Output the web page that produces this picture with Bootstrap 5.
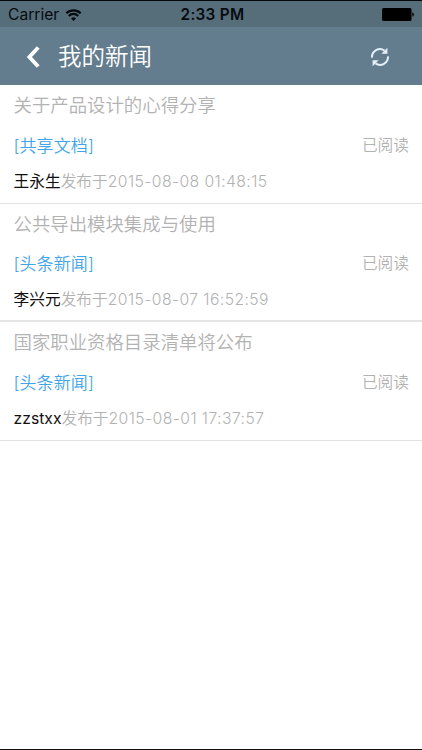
<!DOCTYPE html>
<html lang="zh-CN">
<head>
<meta charset="utf-8">
<meta name="viewport" content="width=device-width, initial-scale=1">
<title>我的新闻</title>
<link href="https://cdn.jsdelivr.net/npm/bootstrap@5.3.0/dist/css/bootstrap.min.css" rel="stylesheet">
<style>
body{font-family:Inter,"Noto Sans CJK SC",sans-serif;color:#b2b2b2;height:750px;overflow:hidden;border-top:1px solid #05070f;border-bottom:1px solid #111}
.status-bar{height:26px;background:#566d7a;color:#060b10;font-size:15.6px;line-height:26px;padding:1px 8px 0 8px}
.status-bar>div{flex:1 1 0}
.carrier-group{gap:6px}
.clock{font-weight:600;font-size:15.3px;letter-spacing:.3px;padding-left:3px}
.title-bar{height:58px;background:#637d8e;color:#fff;padding:0 32px 0 26px}
.title-bar svg{margin-top:2px}
.title-bar h1{font-size:23.5px;font-weight:350;line-height:58px;margin-left:17px;padding-top:2px}
.news{height:118.6px;padding:5px 13px 0 14px;border-bottom:1px solid #e2e2e2}
.news:nth-child(2){border-bottom:2px solid #e4e4e4}
.news>*{line-height:30px;height:30px;white-space:nowrap}
.news h2{font-size:18.4px;font-weight:350;margin:0 0 10.6px -.5px}
.kind{font-size:17px;color:#3fa4ea;font-weight:350;margin-left:-.5px;letter-spacing:.1px}
.state,.meta{font-size:15.7px;font-weight:350}
.meta{margin:6px 0 0 -.4px}
.author{color:#111;font-weight:400}
.date{letter-spacing:.43px}
</style>
<script src="https://cdn.jsdelivr.net/npm/bootstrap@5.3.0/dist/js/bootstrap.bundle.min.js"></script>
</head>
<body class="bg-white">
<header>
  <div class="status-bar d-flex align-items-center">
    <div class="carrier-group d-flex align-items-center"><span>Carrier</span>
      <svg width="17" height="12" viewBox="0 0 16 12" fill="none" stroke="#060b10" stroke-width="2.2"><path d="M.8 4.3a10.2 10.2 0 0 1 14.4 0M3.3 6.9a6.6 6.6 0 0 1 9.4 0"/><path d="M8 12 5.5 9.4a3.6 3.6 0 0 1 5 0z" fill="#060b10" stroke="none"/></svg></div>
    <div class="text-center clock">2:33 PM</div>
    <div class="d-flex justify-content-end"><svg width="32" height="13" viewBox="0 0 32 13"><rect width="29.5" height="13" rx="1.5" fill="#000"/><path d="M30.3 4.2q1.5.6 1.5 2.3t-1.5 2.3z" fill="#000"/></svg></div>
  </div>
  <nav class="title-bar d-flex align-items-center">
    <svg width="15" height="22" viewBox="0 0 15 22"><path d="M12.2 1.5 3.4 11l8.8 9.5" fill="none" stroke="#fff" stroke-width="3.8"/></svg>
    <h1 class="mb-0 me-auto">我的新闻</h1>
    <svg width="20" height="20" viewBox="0 0 20 20" fill="none" stroke="#e6eff7" stroke-width="2"><path d="M2 10.6A8 8 0 0 1 14.5 3.6M18 9.4A8 8 0 0 1 5.5 16.4"/><path d="M17.4.8v6h-6zM2.6 19.2v-6h6z" fill="#e6eff7" stroke="none"/></svg>
  </nav>
</header>
<main>
  <article class="news"><h2>关于产品设计的心得分享</h2>
    <div class="d-flex justify-content-between"><span class="kind">[共享文档]</span><span class="state">已阅读</span></div>
    <div class="meta"><span class="author">王永生</span>发布于<span class="date">2015-08-08 01:48:15</span></div></article>
  <article class="news"><h2>公共导出模块集成与使用</h2>
    <div class="d-flex justify-content-between"><span class="kind">[头条新闻]</span><span class="state">已阅读</span></div>
    <div class="meta"><span class="author">李兴元</span>发布于<span class="date">2015-08-07 16:52:59</span></div></article>
  <article class="news"><h2>国家职业资格目录清单将公布</h2>
    <div class="d-flex justify-content-between"><span class="kind">[头条新闻]</span><span class="state">已阅读</span></div>
    <div class="meta"><span class="author">zzstxx</span>发布于<span class="date">2015-08-01 17:37:57</span></div></article>
</main>
</body>
</html>
